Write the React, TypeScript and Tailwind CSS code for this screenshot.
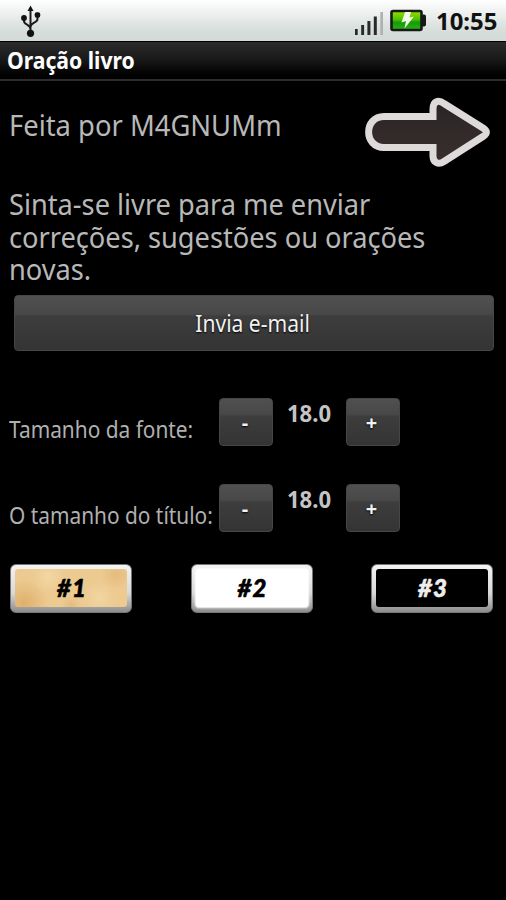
import React from "react";

const buttonBase =
  "flex items-center justify-center rounded-[4px] border border-[#464646] bg-[linear-gradient(#505050,#484848_33%,#3d3d3d_38%,#343434)] text-[#f2f2f2] [text-shadow:0_1px_2px_#000]";

function UsbIcon() {
  return (
    <svg className="ml-[20px] mt-[5px] h-[32px] w-[21px]" viewBox="0 0 21 32">
      <g fill="none" stroke="#1a1c1b" strokeWidth="2">
        <path d="M10.500 5v24M4 13v3c0 4 6.500 3.500 6.500 8M17.500 10v4c0 4-7 3.500-7 8" />
      </g>
      <g fill="#111">
        <path d="M10.500 .5l3 5.500h-6z" />
        <circle cx="4" cy="13" r="2.900" />
        <rect x="14.700" y="7.300" width="5.500" height="5.500" rx="2" />
        <circle cx="10.500" cy="28.300" r="3.600" />
      </g>
    </svg>
  );
}

function SignalIcon() {
  return (
    <svg className="mt-[11px] h-[26px] w-[30px]" viewBox="0 0 30 26">
      <g fill="#262a29">
        <rect x="1" y="18" width="2.700" height="6" />
        <rect x="7.200" y="14" width="2.900" height="10" />
        <rect x="13.400" y="10" width="3" height="14" />
        <rect x="19.800" y="5.500" width="3" height="18.500" />
      </g>
      <rect x="26.300" y="1" width="2.700" height="23" fill="#aeb3b2" />
    </svg>
  );
}

function BatteryIcon() {
  return (
    <svg className="ml-[6px] mt-[9px] h-[24px] w-[37px]" viewBox="0 0 37 24">
      <defs>
        <linearGradient id="charge" x1="0" y1="0" x2="0" y2="1">
          <stop offset="0" stopColor="#9be000" />
          <stop offset=".45" stopColor="#4fc000" />
          <stop offset=".6" stopColor="#129c0a" />
          <stop offset="1" stopColor="#2fae16" />
        </linearGradient>
      </defs>
      <rect x="31" y="5.500" width="5" height="12" rx="2" fill="#151a15" />
      <rect x="1.500" y="2" width="30" height="19" rx="1.500" fill="url(#charge)" stroke="#151a15" strokeWidth="2.600" />
      <path d="M15 3h6l-1.500 5.500 4.500-1-9.500 12 1.500-7.500-4.500 1.500z" fill="#f4fbe8" />
    </svg>
  );
}

function ArrowIcon() {
  return (
    <svg className="mt-[10px] h-[80px] w-[128px]" viewBox="0 0 128 80">
      <defs>
        <linearGradient id="arrow" x1="0" y1="0" x2="0" y2="1">
          <stop offset="0" stopColor="#292526" />
          <stop offset="1" stopColor="#3a2e2e" />
        </linearGradient>
      </defs>
      <path
        d="M20 25.500H69V18c0-8 5.500-9.500 11-5.500L119 37c4.500 3 4.500 5.500 0 8.500L80 70.500c-5.500 3.500-11 1.500-11-5.500V56.500H20C-.5 56.500-.5 25.500 20 25.500Z"
        fill="url(#arrow)"
        stroke="#dedada"
        strokeWidth="7"
        strokeLinejoin="miter"
      />
    </svg>
  );
}

function SizeRow({ label }: { label: string }) {
  return (
    <div className="flex h-[48px] items-start">
      <div className="mt-[16px] w-[210px] whitespace-nowrap text-[23px] leading-[30px] text-[#b0b0b0]">
        <span className="inline-block origin-left scale-x-[0.907]">{label}</span>
      </div>
      <button className={`${buttonBase} h-[48px] w-[54px] pr-[2px] pt-[2px] text-[20px] font-bold`}>-</button>
      <div className="flex w-[73px] justify-center pr-px text-[23px] font-bold leading-[30px] text-[#c4c4c4]">
        <span className="inline-block scale-x-[0.96]">18.0</span>
      </div>
      <button className={`${buttonBase} h-[48px] w-[54px] pr-[3px] pt-[2px] text-[20px] font-bold`}>+</button>
    </div>
  );
}

const frame =
  "h-[49px] w-[122px] rounded-[6px] border border-[#777] bg-[linear-gradient(#f4f4f4,#d8d8d8_60%,#8c8c8c)] px-[4px] pt-[4px] pb-[5px]";
const face =
  "flex h-full w-full items-center justify-center rounded-[3px] pl-[2px] pt-[1px] font-['Lato',sans-serif] text-[24px] font-black italic tracking-[1px]";

export default function App() {
  return (
    <div className="h-[900px] w-[506px] overflow-hidden bg-black font-['Noto_Sans','Open_Sans',sans-serif] text-[#b8b8b8]">
      <header className="flex h-[41px] items-start bg-[linear-gradient(#ffffff,#f4f6f5_20%,#d6dddb_75%,#d3dbd8)]">
        <UsbIcon />
        <div className="ml-auto flex pr-[9px]">
          <SignalIcon />
          <BatteryIcon />
          <div className="ml-[9px] mt-[6px] w-[61px] whitespace-nowrap text-[23px] font-bold leading-[30px] text-[#111]">
            <span className="inline-block origin-left scale-x-[1.04]">10:55</span>
          </div>
        </div>
      </header>
      <div className="h-[40px] border-b-2 border-t border-b-[#2d2d2d] border-t-black bg-[linear-gradient(#2b2b2b,#1a1a1a_45%,#000_90%)] pl-[7px] pt-[2px] text-[23px] font-bold leading-[32px] text-white">
        <span className="inline-block origin-left scale-x-[0.92]">Oração livro</span>
      </div>
      <main>
        <div className="flex h-[105px] justify-between pl-[9px] pr-[14px]">
          <div className="mt-[25px] whitespace-nowrap text-[29px] leading-[38px]">
            <span className="inline-block origin-left scale-x-[0.944]">Feita por M4GNUMm</span>
          </div>
          <ArrowIcon />
        </div>
        <div className="pl-[9px] pt-[2px]">
          <p className="w-[480px] origin-left scale-x-[0.938] text-[29px] leading-[32.6px]">
            Sinta-se livre para me enviar
            <br />
            correções, sugestões ou orações
            <br />
            novas.
          </p>
        </div>
        <div className="pl-[14px] pr-[12px] pt-[9px]">
          <button className={`${buttonBase} h-[56px] w-full pr-[2px] text-[23px]`}>
            <span className="inline-block scale-x-[0.915]">Invia e-mail</span>
          </button>
        </div>
        <div className="mt-[47px] flex flex-col gap-[38px] pl-[9px]">
          <SizeRow label="Tamanho da fonte:" />
          <SizeRow label="O tamanho do título:" />
        </div>
        <div className="mt-[32px] flex justify-between pl-[10px] pr-[13px]">
          <div className={frame}>
            <div
              className={`${face} bg-[#ecca90] bg-[radial-gradient(circle_at_8%_90%,#dfb06c_0,transparent_22%),radial-gradient(circle_at_90%_15%,#e5bb7d_0,transparent_14%),radial-gradient(circle_at_30%_20%,#f3d7a4_0,transparent_20%),radial-gradient(circle_at_75%_75%,#f2d5a0_0,transparent_20%),radial-gradient(circle_at_50%_95%,#e5bb7d_0,transparent_14%)] text-black [-webkit-text-stroke:0.6px_#000]`}
            >
              #1
            </div>
          </div>
          <div className={frame}>
            <div className={`${face} bg-white text-black shadow-[0_0_2px_1px_#fff] [-webkit-text-stroke:0.6px_#000]`}>#2</div>
          </div>
          <div className={frame}>
            <div className={`${face} bg-black text-[#eee] [-webkit-text-stroke:0.6px_#eee]`}>#3</div>
          </div>
        </div>
      </main>
    </div>
  );
}
